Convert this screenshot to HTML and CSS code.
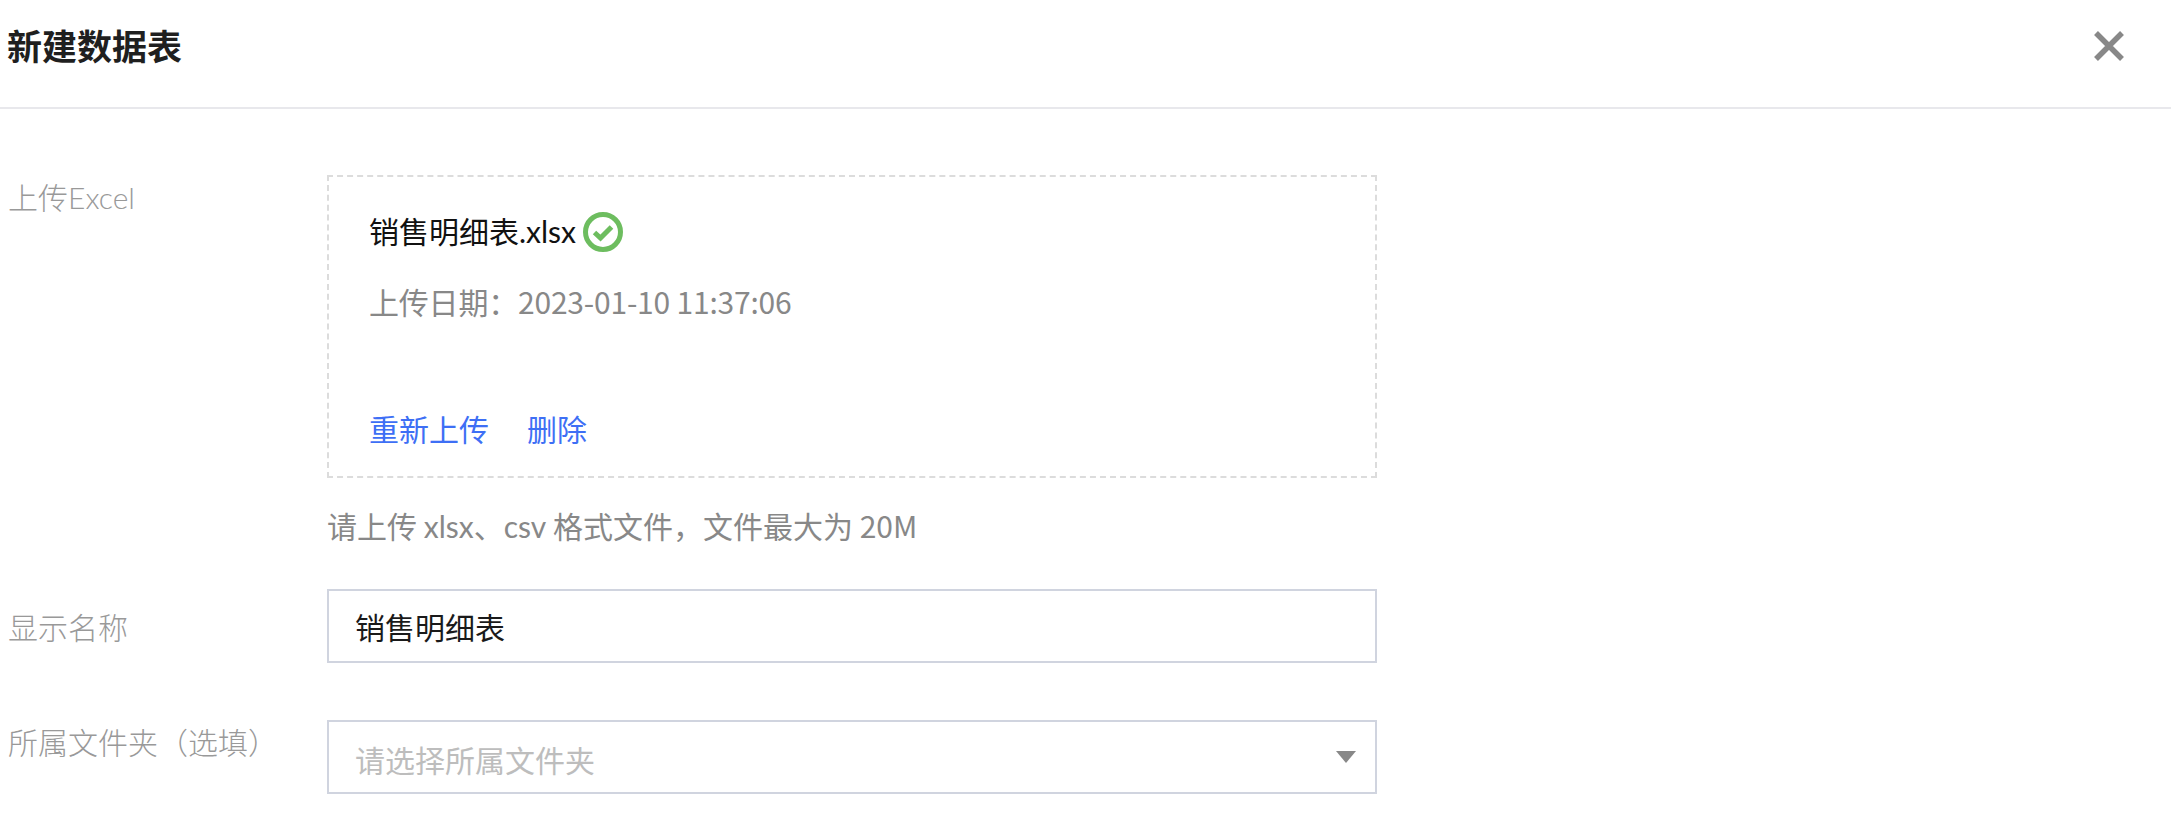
FILE: index.html
```html
<!DOCTYPE html>
<html lang="zh-CN">
<head>
<meta charset="utf-8">
<title>新建数据表</title>
<link rel="stylesheet" href="styles.css">
</head>
<body>
<header class="header">
  <h1 class="title">新建数据表</h1>
  <button class="close" aria-label="关闭">
    <svg class="close-icon" width="30" height="30" viewBox="0 0 30 30"><path d="M2 2 L28 28 M28 2 L2 28" stroke="#888" stroke-width="5.5" fill="none"/></svg>
  </button>
</header>
<main class="form">
  <div class="row">
    <div class="label label-upload">上传<span class="latin">Excel</span></div>
    <div class="field">
      <div class="upload">
        <div class="file">
          <span class="file-name">销售明细表<span class="latin">.xlsx</span></span>
          <svg class="check" width="40" height="40" viewBox="0 0 40 40"><circle cx="20" cy="20" r="17.5" stroke="#6dbd5f" stroke-width="5" fill="none"/><path d="M11.5 20.5 L17.5 26 L28.5 15" stroke="#6dbd5f" stroke-width="5" fill="none"/></svg>
        </div>
        <div class="date">上传日期：2023-01-10 11:37:06</div>
        <div class="actions"><a class="link">重新上传</a><a class="link">删除</a></div>
      </div>
      <p class="hint">请上传 <span class="latin">xlsx</span>、<span class="latin">csv</span> 格式文件，文件最大为 20M</p>
    </div>
  </div>
  <div class="row row-name">
    <div class="label label-name">显示名称</div>
    <div class="field"><div class="control value"><span>销售明细表</span></div></div>
  </div>
  <div class="row row-folder">
    <div class="label label-folder">所属文件夹（选填）</div>
    <div class="field">
      <div class="control placeholder">
        <span class="placeholder-text">请选择所属文件夹</span>
        <svg class="caret" width="20" height="12" viewBox="0 0 20 12"><path d="M0 0 H20 L10 12 Z" fill="#888"/></svg>
      </div>
    </div>
  </div>
</main>
</body>
</html>
```
FILE: styles.css
```css
* { box-sizing: border-box; }
html, body { margin: 0; padding: 0; background: #fff; overflow: hidden; }
body {
  font-family: "Noto Sans CJK SC", "Noto Sans", sans-serif;
  font-size: 30px;
  line-height: 40px;
  width: 2171px;
  height: 835px;
}
.latin { font-family: "Lato", "Noto Sans CJK SC", sans-serif; }
.header {
  height: 109px;
  border-bottom: 2px solid #e8e8ec;
  display: flex;
  align-items: center;
  justify-content: space-between;
  padding: 0 47px 15px 7px;
}
.title {
  margin: 0 0 2px;
  font-size: 35px;
  line-height: 46px;
  font-weight: 700;
  color: #1f1f1f;
}
.close {
  width: 30px;
  height: 30px;
  padding: 0;
  border: 0;
  background: none;
  display: block;
}
.close-icon { display: block; }
.form { padding: 66px 0 0 8px; }
.row { display: flex; }
.row-name { margin-top: 43px; }
.row-folder { margin-top: 57px; }
.label {
  width: 319px;
  flex: none;
  color: #999;
  font-weight: 300;
}
.label-upload { padding-top: 1px; }
.label-name { padding-top: 17px; }
.label-folder { padding-top: 1px; }
.field { width: 1050px; flex: none; }
.upload {
  height: 303px;
  border: 2px dashed #dcdcdc;
  padding: 33px 0 28px 40px;
  display: flex;
  flex-direction: column;
}
.file {
  display: flex;
  align-items: center;
  gap: 7px;
  color: #111;
}
.file-name { padding-bottom: 2px; }
.check { flex: none; }
.date { margin-top: 28px; color: #888; letter-spacing: -0.2px; }
.actions { margin-top: auto; display: flex; gap: 38px; }
.link { color: #3e6ff5; }
.hint { margin: 27px 0 0; color: #888; }
.control {
  height: 74px;
  border: 2px solid #d0d4df;
  padding: 0 19px 0 26px;
  display: flex;
  align-items: center;
  justify-content: space-between;
}
.value { color: #1a1a1a; }
.placeholder { color: #bdbdbd; }
.placeholder-text { padding-top: 4px; }
.caret { flex: none; display: block; }
```
